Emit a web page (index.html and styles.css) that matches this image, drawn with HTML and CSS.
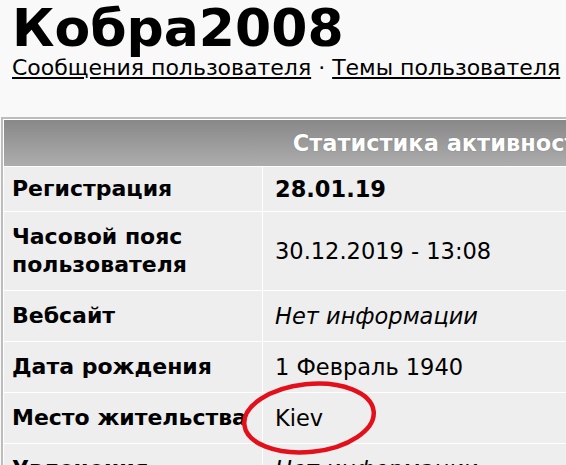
FILE: index.html
```html
<!DOCTYPE html>
<html lang="ru">
<head>
<meta charset="utf-8">
<title>Кобра2008</title>
<link rel="stylesheet" href="styles.css">
</head>
<body>
<div class="page">
  <h1 class="username">Кобра2008</h1>
  <div class="userlinks">
    <a href="#">Сообщения пользователя</a> · <a href="#">Темы пользователя</a>
  </div>
  <div class="stats-wrap">
    <table class="stats">
      <tr><th colspan="2" class="stats-head">Статистика активности</th></tr>
      <tr class="row-first"><td class="label">Регистрация</td><td class="value"><b>28.01.19</b></td></tr>
      <tr><td class="label">Часовой пояс<br>пользователя</td><td class="value">30.12.2019 - 13:08</td></tr>
      <tr><td class="label">Вебсайт</td><td class="value"><i>Нет информации</i></td></tr>
      <tr><td class="label">Дата рождения</td><td class="value">1 Февраль 1940</td></tr>
      <tr><td class="label">Место жительства</td><td class="value">Kiev</td></tr>
      <tr><td class="label">Увлечения</td><td class="value"><i>Нет информации</i></td></tr>
    </table>
    <svg class="circle-mark" width="150" height="90" viewBox="0 0 150 90">
      <ellipse cx="75" cy="45" rx="65" ry="34" fill="none" stroke="#e3101c" stroke-width="4.5" transform="rotate(-6 75 45)"/>
    </svg>
  </div>
</div>
</body>
</html>
```

FILE: styles.css
```css
html, body {
  margin: 0;
  padding: 0;
  overflow: hidden;
  background: #f9f9f9;
}
body {
  font-family: "DejaVu Sans", Verdana, sans-serif;
  color: #000;
}
.page {
  padding-left: 1px;
  width: 1000px;
}
.username {
  margin: 2px 0 0 0;
  padding-left: 11px;
  font-size: 52px;
  line-height: 1;
  font-weight: bold;
}
.userlinks {
  padding-left: 11px;
  font-size: 22px;
  line-height: 28px;
}
.userlinks a {
  color: #000;
}
.stats-wrap {
  position: relative;
  margin-top: 35px;
}
.stats {
  width: 884px;
  border: 2px solid #bcbcbc;
  border-spacing: 1px;
  background: #fff;
  font-size: 22.5px;
}
.stats-head {
  height: 46px;
  padding: 0;
  background: linear-gradient(#888, #adadad);
  color: #fff;
  text-shadow: 0 0 1px #666;
  text-align: center;
  font-weight: bold;
}
.stats td {
  background: #eee;
  line-height: 28px;
  padding: 11px 12px;
  vertical-align: middle;
}
.stats td.label {
  width: 238px;
  padding-left: 8px;
  font-size: 22px;
  font-weight: bold;
}
.row-first td {
  padding-top: 8px;
  padding-bottom: 8px;
}
.circle-mark {
  position: absolute;
  left: 233px;
  top: 256px;
}
```
